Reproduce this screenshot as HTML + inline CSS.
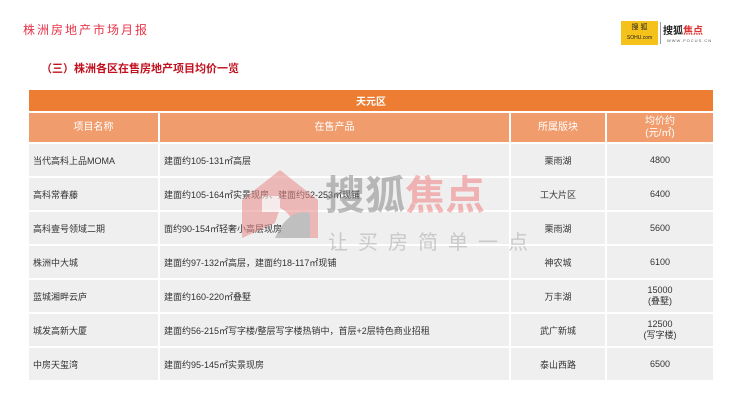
<!DOCTYPE html>
<html><head><meta charset="utf-8"><style>
*{margin:0;padding:0;box-sizing:border-box}
body{width:740px;height:416px;background:#fff;position:relative;overflow:hidden;font-family:"Liberation Sans","Noto Sans CJK SC",sans-serif}
.t1{position:absolute;left:23px;top:21px;font-size:12px;color:#e8344a;letter-spacing:2px}
.t2{position:absolute;left:41px;top:60px;font-size:11px;font-weight:bold;color:#c0101e}
table{position:absolute;left:27px;top:88px;width:688px;border-collapse:collapse;font-size:9px;color:#333}
td{border:2px solid #fff;background:#efefef;height:34px;padding:0 4px}
.h0 td{background:#ec7d33;color:#fff;font-weight:bold;text-align:center;height:23px;font-size:10px;border-bottom:2px solid #fff}
.h1 td{background:#f09c6d;color:#fff;text-align:center;height:31px;font-size:10px;line-height:12px}
.c{text-align:center}
.wm{position:absolute;left:240px;top:168px;opacity:.55}
</style></head><body>
<div class="t1">株洲房地产市场月报</div>
<div class="t2">（三）株洲各区在售房地产项目均价一览</div>
<div style="position:absolute;left:621px;top:21px;width:37px;height:24px;background:#f4c21b;font-size:7px;color:#222;text-align:center;line-height:10px;padding-top:2px">搜 狐<br><span style="font-size:5px">SOHU.com</span></div>
<div style="position:absolute;left:660px;top:22px;width:1px;height:22px;background:#999"></div>
<div style="position:absolute;left:663px;top:22px;font-size:10px;color:#222;font-weight:bold">搜狐<span style="color:#d33">焦点</span></div>
<div style="position:absolute;left:667px;top:38px;font-size:4px;color:#555;letter-spacing:1px">WWW.FOCUS.CN</div>
<table>
<tr class="h0"><td colspan="4">天元区</td></tr>
<tr class="h1"><td style="width:131px">项目名称</td><td style="width:351px">在售产品</td><td style="width:96px">所属版块</td><td>均价约<br>(元/㎡)</td></tr>
<tr><td>当代高科上品MOMA</td><td>建面约105-131㎡高层</td><td class="c">栗雨湖</td><td class="c">4800</td></tr>
<tr><td>高科常春藤</td><td>建面约105-164㎡实景现房、建面约52-253㎡现铺</td><td class="c">工大片区</td><td class="c">6400</td></tr>
<tr><td>高科壹号领域二期</td><td>面约90-154㎡轻奢小高层现房</td><td class="c">栗雨湖</td><td class="c">5600</td></tr>
<tr><td>株洲中大城</td><td>建面约97-132㎡高层，建面约18-117㎡现铺</td><td class="c">神农城</td><td class="c">6100</td></tr>
<tr><td>蓝城湘畔云庐</td><td>建面约160-220㎡叠墅</td><td class="c">万丰湖</td><td class="c" style="line-height:11px">15000<br>(叠墅)</td></tr>
<tr><td>城发高新大厦</td><td>建面约56-215㎡写字楼/整层写字楼热销中，首层+2层特色商业招租</td><td class="c">武广新城</td><td class="c" style="line-height:11px">12500<br>(写字楼)</td></tr>
<tr><td>中房天玺湾</td><td>建面约95-145㎡实景现房</td><td class="c">泰山西路</td><td class="c">6500</td></tr>
</table>
<div class="wm">
<svg width="80" height="80" style="position:absolute;left:0;top:0"><path d="M40 2 L78 32 L78 70 L45 70 Q60 50 40 40 L35 55 L2 70 L2 32 Z" fill="#e98b8b"/><rect x="22" y="28" width="18" height="16" fill="#fff" opacity=".8"/><path d="M35 70 Q48 40 70 45 L70 70 Z" fill="#999"/></svg>
<div style="position:absolute;left:85px;top:6px;font-size:40px;font-weight:bold;white-space:nowrap;line-height:44px"><span style="color:#888">搜狐</span><span style="color:#f08080">焦点</span></div>
<div style="position:absolute;left:88px;top:58px;font-size:20px;color:#aaa;letter-spacing:10px;white-space:nowrap">让买房简单一点</div>
</div>
</body></html>
